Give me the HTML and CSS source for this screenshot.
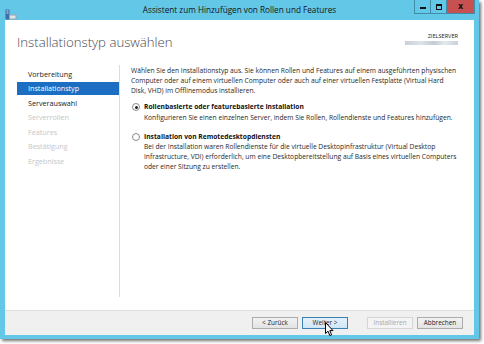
FILE: index.html
```html
<!DOCTYPE html>
<html lang="de">
<head>
  <title>Assistent zum Hinzufügen von Rollen und Features</title>
  <link rel="stylesheet" href="styles.css">
</head>

<body>
  <!-- Window -->
  <div class="window">
    <div class="titlebar">
      <div class="app-icon">
        <svg width="12" height="11" viewBox="0 0 12 11">
          <rect x="0.5" y="0.5" width="4" height="10" fill="#3b6ea5" />
          <rect x="1.5" y="1.5" width="2" height="1" fill="#cfe3f5" />
          <rect x="1.5" y="3.5" width="2" height="1" fill="#cfe3f5" />
          <rect x="4" y="5.5" width="7.5" height="5" fill="#9aa4ad" />
          <rect x="5" y="6.5" width="5.5" height="3" fill="#dfe4e8" />
        </svg>
      </div>
      <div class="title">Assistent zum Hinzufügen von Rollen und Features</div>
      <div class="caption-buttons">
        <span class="cap min"><i></i></span>
        <span class="cap max"><i></i></span>
        <span class="cap close">x</span>
      </div>
    </div>

    <div class="client">
      <!-- Header -->
      <div class="header">
        <h1>Installationstyp auswählen</h1>
        <div class="target">
          <div class="target-label">ZIELSERVER</div>
          <div class="target-name"></div>
        </div>
      </div>

      <!-- Steps + content -->
      <div class="wizard">
        <div class="steps">
          <div class="step">Vorbereitung</div>
          <div class="step active">Installationstyp</div>
          <div class="step">Serverauswahl</div>
          <div class="step disabled">Serverrollen</div>
          <div class="step disabled">Features</div>
          <div class="step disabled">Bestätigung</div>
          <div class="step disabled">Ergebnisse</div>
        </div>

        <div class="content">
          <p class="intro">Wählen Sie den Installationstyp aus. Sie können Rollen und Features auf einem ausgeführten physischen<br>Computer oder auf einem virtuellen Computer oder auch auf einer virtuellen Festplatte (Virtual Hard<br>Disk, VHD) im Offlinemodus installieren.</p>

          <div class="option">
            <div class="option-label"><span class="radio checked"></span>Rollenbasierte oder featurebasierte Installation</div>
            <div class="option-desc">Konfigurieren Sie einen einzelnen Server, indem Sie Rollen, Rollendienste und Features hinzufügen.</div>
          </div>

          <div class="option">
            <div class="option-label"><span class="radio"></span>Installation von Remotedesktopdiensten</div>
            <div class="option-desc">Bei der Installation waren Rollendienste für die virtuelle Desktopinfrastruktur (Virtual Desktop<br>Infrastructure, VDI) erforderlich, um eine Desktopbereitstellung auf Basis eines virtuellen Computers<br>oder einer Sitzung zu erstellen.</div>
          </div>
        </div>
      </div>

      <!-- Footer -->
      <div class="footer">
        <button class="btn">&lt; Zurück</button>
        <button class="btn default">Weiter &gt;</button>
        <button class="btn disabled install">Installieren</button>
        <button class="btn">Abbrechen</button>
      </div>
    </div>
  </div>

  <!-- mouse pointer -->
  <svg class="cursor" width="10" height="15" viewBox="0 0 10 15">
    <path d="M0.5 0.5 L0.5 11.5 L3 9.2 L4.8 13.6 L6.6 12.8 L4.8 8.6 L8 8.6 Z" fill="#fff" stroke="#000" stroke-width="1" stroke-linejoin="round" />
  </svg>
</body>
</html>
```

FILE: styles.css
```css
html, body {
  margin: 0;
  background-color: #ffffff;
}

body {
  width: 484px;
  height: 344px;
  position: relative;
  font-family: "Open Sans", "Noto Sans", sans-serif;
  color: #1e1e1e;
}

/* Window frame */
.window {
  width: 479px;
  height: 339px;
  box-sizing: border-box;
  background-color: #63c7e7;
  padding: 0 5px 4px 5px;
  display: flex;
  flex-direction: column;
  box-shadow: 2px 2px 3px rgba(0, 0, 0, 0.55);
}

.titlebar {
  height: 20px;
  flex-shrink: 0;
  display: grid;
  grid-template-columns: 1fr auto 1fr;
  align-items: start;
}

.app-icon {
  padding-top: 3px;
  height: 11px;
}

.title {
  font-size: 8.2px;
  line-height: 20px;
  color: #141414;
  white-space: nowrap;
}

.caption-buttons {
  justify-self: end;
  display: flex;
  margin-right: -1px;
  border: 1px solid #3f8ca8;
  border-top: none;
}

.cap {
  height: 13px;
  width: 16px;
  display: flex;
  align-items: center;
  justify-content: center;
  box-sizing: border-box;
  border-right: 1px solid #3f8ca8;
}

.cap.min i {
  display: block;
  width: 6px;
  height: 2px;
  margin-top: 3px;
  background-color: #111;
}

.cap.max i {
  display: block;
  width: 4px;
  height: 3px;
  border: 1.5px solid #111;
  border-top-width: 2px;
}

.cap.close {
  width: 27px;
  border-right: none;
  background-color: #c75050;
  color: #111;
  font-family: "DejaVu Sans", sans-serif;
  font-weight: bold;
  font-size: 8px;
  line-height: 13px;
}

/* Client area */
.client {
  flex: 1;
  background-color: #ffffff;
  display: flex;
  flex-direction: column;
}

.header {
  height: 42px;
  flex-shrink: 0;
  display: flex;
  justify-content: space-between;
  padding: 0 16px 0 12px;
}

.header h1 {
  margin: 0;
  padding-top: 14px;
  font-size: 13.2px;
  line-height: 17px;
  font-weight: 300;
  color: #464a50;
}

.target {
  padding-top: 13px;
  display: flex;
  flex-direction: column;
  align-items: flex-end;
}

.target-label {
  font-size: 5.6px;
  line-height: 7px;
  color: #222;
}

.target-name {
  margin-top: 1px;
  width: 53px;
  height: 4px;
  background: linear-gradient(90deg, #c9cfd8 0%, #dfe3ea 30%, #c4cbd6 55%, #e6e9ee 75%, #c9d0da 100%);
  filter: blur(0.6px);
}

/* Steps and content */
.wizard {
  flex: 1;
  display: flex;
  padding-left: 12px;
}

.steps {
  width: 102px;
  margin-top: 3px;
  margin-bottom: 13px;
  padding-top: 2.5px;
  border-right: 1px solid #dcdcdc;
  display: flex;
  flex-direction: column;
  gap: 1.5px;
}

.step {
  height: 13px;
  line-height: 13px;
  padding-left: 11px;
  font-size: 7.2px;
  color: #222;
}

.step.active {
  background-color: #1b6ec2;
  color: white;
}

.step.disabled {
  color: #c6c6c6;
}

.content {
  padding: 4px 0 0 11px;
  font-size: 6.7px;
  line-height: 10px;
  color: #1f1f1f;
  white-space: nowrap;
}

.intro {
  margin: 0 0 6px 0;
}

.option {
  margin-bottom: 9px;
}

.option-label {
  display: flex;
  align-items: center;
  font-weight: bold;
  color: #111;
}

.option-desc {
  padding-left: 13px;
  margin-top: 0.5px;
}

.radio {
  width: 6px;
  height: 6px;
  margin: 0 4px 0 1px;
  border: 1px solid #8a8a8a;
  border-radius: 50%;
  background-color: white;
  display: flex;
  align-items: center;
  justify-content: center;
}

.radio.checked::after {
  content: "";
  width: 3px;
  height: 3px;
  border-radius: 50%;
  background-color: #222;
}

/* Footer */
.footer {
  height: 25px;
  box-sizing: border-box;
  flex-shrink: 0;
  background-color: #f0f0f0;
  border-top: 1px solid #dfdfdf;
  padding: 6px 11px 0 0;
  display: flex;
  justify-content: flex-end;
  gap: 4px;
}

.btn {
  width: 46px;
  height: 12px;
  padding: 0;
  border: 1px solid #acacac;
  background: linear-gradient(#f2f2f2, #e3e3e3);
  font-family: "Open Sans", "Noto Sans", sans-serif;
  font-size: 6.4px;
  line-height: 10px;
  color: #1e1e1e;
}

.btn.default {
  border-color: #3c7fb1;
  background: linear-gradient(#e5f1fb, #cfe6f8);
}

.btn.install {
  margin-left: 15px;
}

.btn.disabled {
  border-color: #d5d5d5;
  background: #f4f4f4;
  color: #a6a6a6;
}

/* Mouse pointer lies over the button */
.cursor {
  position: absolute;
  left: 325px;
  top: 322px;
}
```
